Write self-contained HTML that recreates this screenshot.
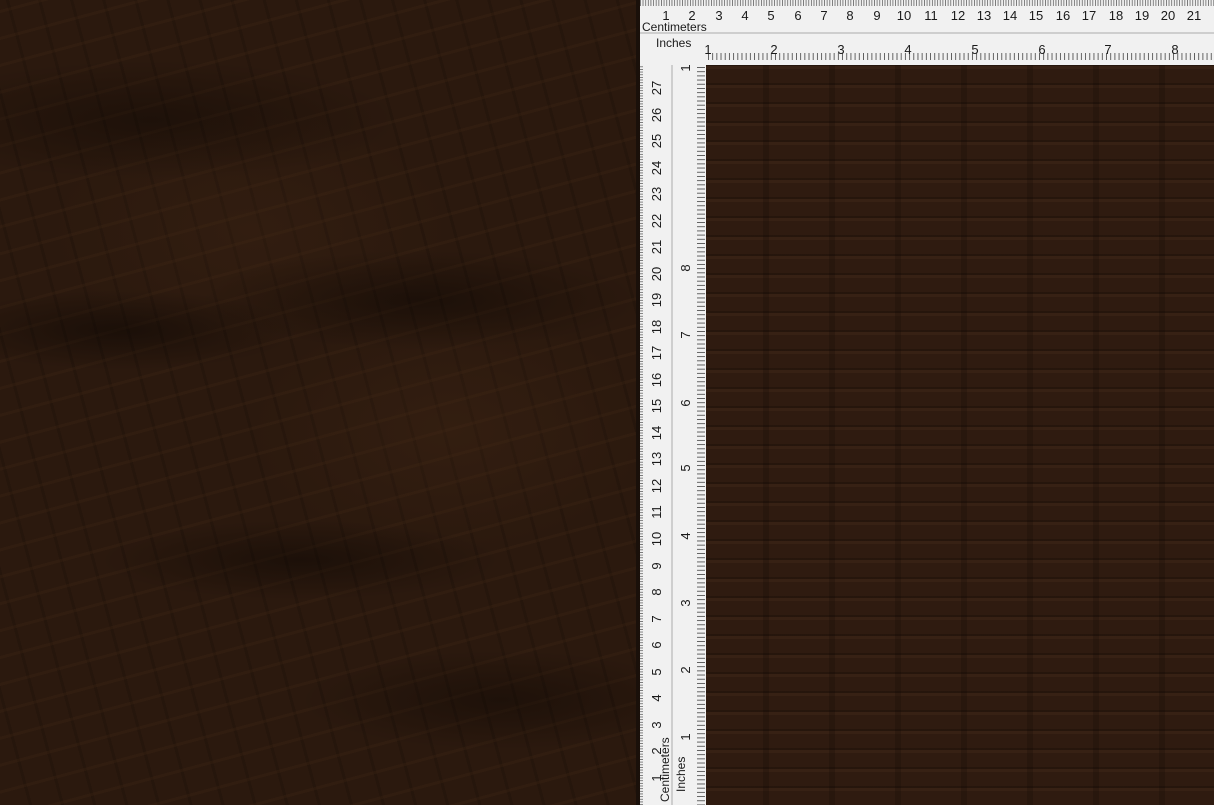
<!DOCTYPE html>
<html><head><meta charset="utf-8"><style>
html,body{margin:0;padding:0;width:1214px;height:805px;overflow:hidden;background:#2a190e}
#left{position:absolute;left:0;top:0;width:638px;height:805px;
background:
radial-gradient(ellipse 180px 40px at 120px 330px,rgba(10,5,2,.5),transparent),
radial-gradient(ellipse 220px 50px at 420px 300px,rgba(10,5,2,.45),transparent),
radial-gradient(ellipse 200px 40px at 300px 560px,rgba(10,5,2,.45),transparent),
radial-gradient(ellipse 250px 60px at 150px 120px,rgba(10,5,2,.4),transparent),
radial-gradient(ellipse 200px 50px at 500px 700px,rgba(10,5,2,.4),transparent),
radial-gradient(ellipse 200px 120px at 450px 430px,rgba(70,42,22,.3),transparent),
radial-gradient(ellipse 200px 120px at 250px 230px,rgba(70,42,22,.25),transparent),
repeating-linear-gradient(-15deg,transparent 0 20px,rgba(62,38,20,.3) 20px 23px,transparent 23px 26px),
repeating-linear-gradient(75deg,transparent 0 28px,rgba(15,8,4,.2) 28px 31px),
#2b190e}
#right{position:absolute;left:705px;top:65px;width:509px;height:740px;
background:
repeating-linear-gradient(90deg,transparent 0 58px,rgba(18,10,5,.25) 58px 64px,transparent 64px 66px),
repeating-linear-gradient(0deg,transparent 0 14px,rgba(65,40,24,.45) 14px 17px,rgba(20,11,6,.35) 17px 19px),
#2f1b10}
svg{position:absolute;left:0;top:0}
text{font-family:"Liberation Sans",sans-serif;fill:#1a1a1a}
</style></head><body>
<div id="left"></div>
<div id="right"></div>
<svg width="1214" height="805" viewBox="0 0 1214 805">
<defs>
<pattern id="mmH" x="640" y="0" width="2.63" height="12" patternUnits="userSpaceOnUse"><rect width="0.8" height="6" fill="#666"/></pattern>
<pattern id="inH" x="708" y="0" width="4.19" height="15" patternUnits="userSpaceOnUse"><rect width="0.9" height="7" y="8" fill="#555"/></pattern>
<pattern id="mmV" x="0" y="0" width="12" height="2.654" patternUnits="userSpaceOnUse"><rect height="0.8" width="7" fill="#666"/></pattern>
<pattern id="inV" x="0" y="0" width="15" height="4.19" patternUnits="userSpaceOnUse"><rect height="0.9" width="8" x="7" fill="#555"/></pattern>
</defs>
<rect x="636" y="0" width="578" height="65" fill="#f1f1f1"/>
<rect x="636" y="0" width="70" height="805" fill="#f1f1f1"/>
<rect x="636" y="0" width="4" height="805" fill="#1a100a"/>
<line x1="640" y1="33" x2="1214" y2="33" stroke="#aaa"/>
<line x1="672" y1="65" x2="672" y2="805" stroke="#aaa"/>
<rect x="640" y="0" width="574" height="6" fill="url(#mmH)"/>
<rect x="705" y="49" width="509" height="15" fill="url(#inH)"/>
<rect x="640" y="65" width="8" height="740" fill="url(#mmV)"/>
<rect x="690" y="65" width="15" height="740" fill="url(#inV)"/>
<g font-size="13" text-anchor="middle">
<text x="666" y="20">1</text><text x="692" y="20">2</text><text x="719" y="20">3</text><text x="745" y="20">4</text><text x="771" y="20">5</text><text x="798" y="20">6</text><text x="824" y="20">7</text><text x="850" y="20">8</text><text x="877" y="20">9</text><text x="904" y="20">10</text><text x="931" y="20">11</text><text x="958" y="20">12</text><text x="984" y="20">13</text><text x="1010" y="20">14</text><text x="1036" y="20">15</text><text x="1063" y="20">16</text><text x="1089" y="20">17</text><text x="1116" y="20">18</text><text x="1142" y="20">19</text><text x="1168" y="20">20</text><text x="1194" y="20">21</text>
<text x="708" y="54">1</text><text x="774" y="54">2</text><text x="841" y="54">3</text><text x="908" y="54">4</text><text x="975" y="54">5</text><text x="1042" y="54">6</text><text x="1108" y="54">7</text><text x="1175" y="54">8</text>
</g>
<text x="642" y="31" font-size="12">Centimeters</text>
<text x="656" y="47" font-size="12">Inches</text>
<g font-size="13" text-anchor="middle">
<text transform="translate(661,88) rotate(-90)">27</text>
<text transform="translate(661,115) rotate(-90)">26</text>
<text transform="translate(661,141) rotate(-90)">25</text>
<text transform="translate(661,168) rotate(-90)">24</text>
<text transform="translate(661,194) rotate(-90)">23</text>
<text transform="translate(661,221) rotate(-90)">22</text>
<text transform="translate(661,247) rotate(-90)">21</text>
<text transform="translate(661,274) rotate(-90)">20</text>
<text transform="translate(661,300) rotate(-90)">19</text>
<text transform="translate(661,327) rotate(-90)">18</text>
<text transform="translate(661,353) rotate(-90)">17</text>
<text transform="translate(661,380) rotate(-90)">16</text>
<text transform="translate(661,406) rotate(-90)">15</text>
<text transform="translate(661,433) rotate(-90)">14</text>
<text transform="translate(661,459) rotate(-90)">13</text>
<text transform="translate(661,486) rotate(-90)">12</text>
<text transform="translate(661,512) rotate(-90)">11</text>
<text transform="translate(661,539) rotate(-90)">10</text>
<text transform="translate(661,566) rotate(-90)">9</text>
<text transform="translate(661,592) rotate(-90)">8</text>
<text transform="translate(661,619) rotate(-90)">7</text>
<text transform="translate(661,645) rotate(-90)">6</text>
<text transform="translate(661,672) rotate(-90)">5</text>
<text transform="translate(661,698) rotate(-90)">4</text>
<text transform="translate(661,725) rotate(-90)">3</text>
<text transform="translate(661,751) rotate(-90)">2</text>
<text transform="translate(661,778) rotate(-90)">1</text>
<text transform="translate(690,68) rotate(-90)">1</text>
<text transform="translate(690,268) rotate(-90)">8</text>
<text transform="translate(690,335) rotate(-90)">7</text>
<text transform="translate(690,403) rotate(-90)">6</text>
<text transform="translate(690,468) rotate(-90)">5</text>
<text transform="translate(690,536) rotate(-90)">4</text>
<text transform="translate(690,603) rotate(-90)">3</text>
<text transform="translate(690,670) rotate(-90)">2</text>
<text transform="translate(690,737) rotate(-90)">1</text>
</g>
<text transform="translate(669,802) rotate(-90)" font-size="12">Centimeters</text>
<text transform="translate(685,792) rotate(-90)" font-size="12">Inches</text>
</svg>
</body></html>
